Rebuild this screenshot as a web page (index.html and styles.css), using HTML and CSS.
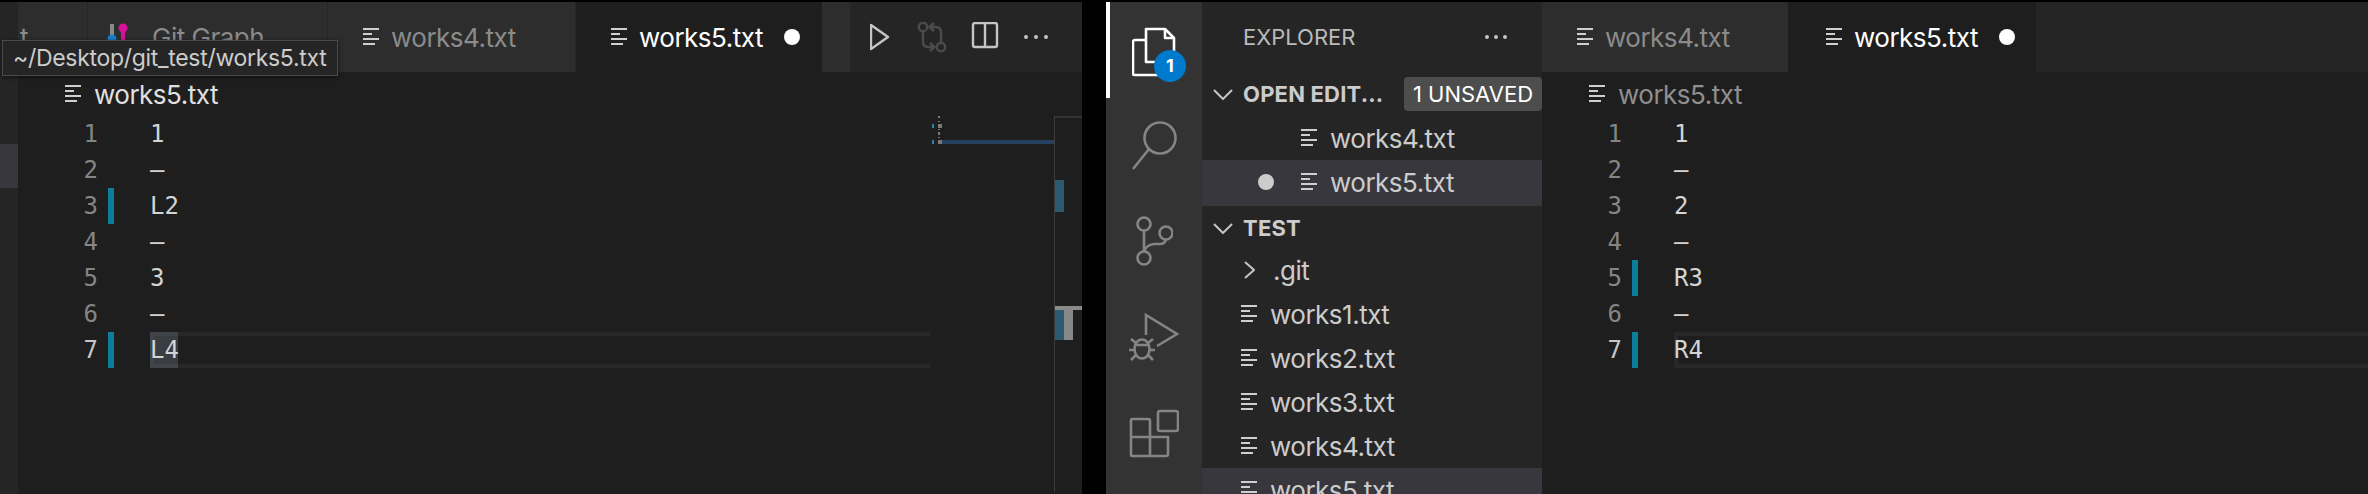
FILE: index.html
```html
<!DOCTYPE html>
<html lang="en">
<head>
<meta charset="utf-8">
<title>VS Code split</title>
<link rel="stylesheet" href="styles.css">
</head>
<body>
<svg class="defs" width="0" height="0" aria-hidden="true">
  <symbol id="file" viewBox="0 0 17 18">
    <rect x="0" y="0" width="16" height="2"/><rect x="0" y="5" width="9" height="2"/>
    <rect x="0" y="10" width="16" height="2"/><rect x="0" y="15" width="12" height="2"/>
  </symbol>
</svg>

<section class="window">
  <div class="strip"><div class="strip-slab"></div></div>
  <div class="pane">
    <div class="tabs">
      <div class="tab tab-cut">t</div>
      <div class="tab tab-graph">
        <svg class="graph-icon" width="24" height="30" viewBox="0 0 24 30">
          <rect x="3" y="2" width="4" height="14" fill="#8a8a8a"/>
          <circle cx="5" cy="17" r="4.5" fill="#1a7fd0"/>
          <circle cx="16" cy="6" r="4.5" fill="#d6119a"/>
          <rect x="14" y="6" width="4" height="16" fill="#d6119a"/>
        </svg>
        <span class="graph-label">Git Graph</span>
      </div>
      <div class="tab tab-w"><svg class="ficon"><use href="#file"/></svg><span>works4.txt</span></div>
      <div class="tab tab-active"><svg class="ficon"><use href="#file"/></svg><span>works5.txt</span><i class="dirty"></i></div>
      <div class="tab tab-blank"></div>
      <div class="actions">
        <svg width="212" height="34" viewBox="0 0 212 34" fill="none">
          <path d="M1 3 L18 15 L1 27 Z" stroke="#c5c5c5" stroke-width="2.4" stroke-linejoin="round"/>
          <g stroke="#4b4b4b" stroke-width="2.4">
            <circle cx="53" cy="5" r="4.2"/><circle cx="71" cy="25" r="4.2"/>
            <path d="M53 9 V20 Q53 25 58 25 H65 M60 21 L64.500 25 L60 29"/>
            <path d="M71 21 V10 Q71 5 66 5 H60 M64 1 L59.500 5 L64 9"/>
          </g>
          <rect x="103" y="1" width="24" height="24" rx="2" stroke="#c5c5c5" stroke-width="2.4"/>
          <path d="M115 1 V25" stroke="#c5c5c5" stroke-width="2.4"/>
          <g fill="#c5c5c5"><circle cx="156" cy="15" r="2"/><circle cx="166" cy="15" r="2"/><circle cx="176" cy="15" r="2"/></g>
        </svg>
      </div>
    </div>
    <div class="crumb crumb-on"><svg class="ficon"><use href="#file"/></svg><span>works5.txt</span></div>
    <div class="code">
      <div class="lines">
        <div class="line"><span class="num">1</span><span class="bar"></span><span class="txt">1</span></div>
        <div class="line"><span class="num">2</span><span class="bar"></span><span class="txt">–</span></div>
        <div class="line"><span class="num">3</span><span class="bar mod"></span><span class="txt">L2</span></div>
        <div class="line"><span class="num">4</span><span class="bar"></span><span class="txt">–</span></div>
        <div class="line"><span class="num">5</span><span class="bar"></span><span class="txt">3</span></div>
        <div class="line"><span class="num">6</span><span class="bar"></span><span class="txt">–</span></div>
        <div class="line"><span class="num num-on">7</span><span class="bar mod"></span><span class="txt current"><span class="sel">L4</span></span></div>
      </div>
      <svg class="minimap" width="122" height="376" viewBox="0 0 122 376">
        <rect x="0" y="8" width="2" height="4" fill="#2f86ad"/>
        <rect x="0" y="24" width="2" height="4" fill="#2f86ad"/>
        <rect x="10" y="24" width="112" height="4" fill="#264060"/>
        <g fill="#7a7a7a">
          <rect x="6" y="0" width="2" height="2"/><rect x="6" y="5" width="2" height="1"/>
          <rect x="6" y="8" width="4" height="4"/><rect x="6" y="13" width="2" height="1"/>
          <rect x="6" y="16" width="2" height="3"/><rect x="6" y="21" width="2" height="1"/>
          <rect x="6" y="24" width="4" height="4"/>
        </g>
      </svg>
      <svg class="overview" width="28" height="376" viewBox="0 0 28 376">
        <rect x="0" y="0" width="28" height="2" fill="#333"/>
        <rect x="0" y="0" width="1" height="376" fill="#3c3c3c"/>
        <rect x="1" y="64" width="9" height="32" fill="#2b596f"/>
        <rect x="1" y="194" width="9" height="30" fill="#2b596f"/>
        <rect x="10" y="192" width="9" height="32" fill="#888"/>
        <rect x="1" y="190" width="27" height="4" fill="#8a8a8a"/>
      </svg>
    </div>
  </div>
</section>

<nav class="activity">
  <div class="act act-on">
    <svg width="64" height="62" viewBox="0 0 64 62" fill="none" stroke="#fff" stroke-width="2.6" stroke-linejoin="round">
      <path d="M14 2 H33 L42 11 V35 H14 Z"/>
      <path d="M33 2 V11 H42"/>
      <path d="M14 13 H3 Q1 13 1 15 V47 Q1 48 3 48 H30 V35"/>
    </svg>
    <span class="badge">1</span>
  </div>
  <div class="act">
    <svg width="48" height="50" viewBox="0 0 48 50" fill="none" stroke="#858585" stroke-width="2.6">
      <circle cx="30" cy="17" r="15.500"/><path d="M19 28 L3 48"/>
    </svg>
  </div>
  <div class="act">
    <svg width="38" height="52" viewBox="0 0 38 52" fill="none" stroke="#858585" stroke-width="2.6">
      <circle cx="9" cy="8" r="6.500"/><circle cx="31" cy="17" r="6.500"/><circle cx="9" cy="42" r="6.500"/>
      <path d="M9 14.500 V35.500 M31 23.500 Q30 28 25 28 H19 Q11 29 9 35.500"/>
    </svg>
  </div>
  <div class="act">
    <svg width="52" height="52" viewBox="0 0 52 52" fill="none" stroke="#858585" stroke-width="2.6">
      <path d="M18 23 V3 L49 22 L29 34"/>
      <ellipse cx="14" cy="37" rx="7.500" ry="9.500"/>
      <path d="M7 33 H21 M3 27 L8 31 M25 27 L20 31 M1 38 H6 M22 38 H27 M3 48 L8 43 M25 48 L20 43"/>
    </svg>
  </div>
  <div class="act">
    <svg width="50" height="50" viewBox="0 0 50 50" fill="none" stroke="#858585" stroke-width="2.6" stroke-linejoin="round">
      <rect x="29" y="2" width="20" height="20" rx="2"/>
      <path d="M3 10 H19 Q21 10 21 12 V46 Q21 47 19 47 H3 Q2 47 2 46 V12 Q2 10 3 10 Z"/>
      <path d="M2 28 H39 V45 Q39 47 37 47 H21"/>
    </svg>
  </div>
</nav>

<aside class="sidebar">
  <header class="side-head"><span>EXPLORER</span>
    <svg width="24" height="6" viewBox="0 0 24 6" fill="#c5c5c5"><circle cx="3" cy="3" r="2"/><circle cx="12" cy="3" r="2"/><circle cx="21" cy="3" r="2"/></svg>
  </header>
  <div class="sec"><svg class="chev" width="20" height="11" viewBox="0 0 20 11" fill="none"><path d="M1 1 L10 10 L19 1"/></svg><span class="sec-title sec-cut">OPEN EDIT...</span><span class="pill">1 UNSAVED</span></div>
  <div class="row row-open"><svg class="ficon"><use href="#file"/></svg><span>works4.txt</span></div>
  <div class="row row-open row-sel"><i class="sdot"></i><svg class="ficon"><use href="#file"/></svg><span>works5.txt</span></div>
  <div class="sec sec-line"><svg class="chev" width="20" height="11" viewBox="0 0 20 11" fill="none"><path d="M1 1 L10 10 L19 1"/></svg><span class="sec-title">TEST</span></div>
  <div class="row row-tree"><svg class="chev chev-r" width="11" height="18" viewBox="0 0 11 18" fill="none"><path d="M1 1 L10 9 L1 17"/></svg><span>.git</span></div>
  <div class="row row-tree"><svg class="ficon"><use href="#file"/></svg><span>works1.txt</span></div>
  <div class="row row-tree"><svg class="ficon"><use href="#file"/></svg><span>works2.txt</span></div>
  <div class="row row-tree"><svg class="ficon"><use href="#file"/></svg><span>works3.txt</span></div>
  <div class="row row-tree"><svg class="ficon"><use href="#file"/></svg><span>works4.txt</span></div>
  <div class="row row-tree row-sel"><svg class="ficon"><use href="#file"/></svg><span>works5.txt</span></div>
</aside>

<section class="pane pane-right">
  <div class="tabs">
    <div class="tab tab-w tab-wr"><svg class="ficon"><use href="#file"/></svg><span>works4.txt</span></div>
    <div class="tab tab-active tab-ar"><svg class="ficon"><use href="#file"/></svg><span>works5.txt</span><i class="dirty"></i></div>
  </div>
  <div class="crumb"><svg class="ficon"><use href="#file"/></svg><span>works5.txt</span></div>
  <div class="code">
    <div class="lines">
      <div class="line"><span class="num">1</span><span class="bar"></span><span class="txt">1</span></div>
      <div class="line"><span class="num">2</span><span class="bar"></span><span class="txt">–</span></div>
      <div class="line"><span class="num">3</span><span class="bar"></span><span class="txt">2</span></div>
      <div class="line"><span class="num">4</span><span class="bar"></span><span class="txt">–</span></div>
      <div class="line"><span class="num">5</span><span class="bar mod"></span><span class="txt">R3</span></div>
      <div class="line"><span class="num">6</span><span class="bar"></span><span class="txt">–</span></div>
      <div class="line"><span class="num num-on">7</span><span class="bar mod"></span><span class="txt current current-r">R4</span></div>
    </div>
  </div>
</section>

<div class="tooltip">~/Desktop/git_test/works5.txt</div>
</body>
</html>
```

FILE: styles.css
```css
* { box-sizing: border-box; }
html, body { margin: 0; height: 494px; overflow: hidden; }
body {
  position: relative;
  display: flex;
  width: 2368px;
  padding-top: 2px;
  background: #000;
  font-family: Inter, "Noto Sans", sans-serif;
  font-size: 26px;
  letter-spacing: -0.5px;
  color: #ccc;
}
.defs { position: absolute; }
.window { display: flex; width: 1082px; margin-right: 24px; flex: none; }
.strip { width: 18px; flex: none; background: #252526; }
.strip-slab { margin-top: 142px; height: 44px; background: #37373d; }

.pane { flex: 1; min-width: 0; display: flex; flex-direction: column; background: #1e1e1e; }
.tabs { display: flex; height: 70px; flex: none; background: #252526; }
.tab { display: flex; align-items: center; flex: none; height: 100%; background: #2d2d2d; color: #8b8b8b; margin-right: 1px; }
.tab-cut { width: 69px; padding-left: 2px; overflow: hidden; }
.tab-graph { width: 239px; padding-left: 19px; }
.graph-icon { flex: none; margin-top: 0; }
.graph-label { margin-left: 21px; }
.tab-w { width: 247px; padding-left: 35px; gap: 11px; }
.tab-active { width: 246px; padding-left: 35px; gap: 11px; background: #1e1e1e; color: #fff; margin-right: 0; }
.tab-blank { width: 28px; margin-right: 0; }
.tab-wr { width: 246px; margin-right: 0; }
.tab-ar { width: 248px; padding-left: 38px; }
.ficon { width: 17px; height: 18px; flex: none; fill: currentColor; }
.tab .ficon, .row .ficon, .crumb .ficon { fill: #cfcfcf; }
.dirty { width: 16px; height: 16px; margin-left: 10px; border-radius: 50%; background: #fff; flex: none; }

.actions { flex: 1; display: flex; align-items: center; padding: 4px 0 0 20px; }

.crumb { display: flex; align-items: center; gap: 12px; height: 44px; flex: none; padding-left: 47px; color: #8f8f8f; }
.crumb-on { color: #e0e0e0; }

.code { display: flex; flex: 1; min-height: 0; }
.lines { flex: 1; min-width: 0; }
.line {
  display: flex;
  align-items: center;
  height: 36px;
  font-family: "DejaVu Sans Mono", "Liberation Mono", monospace;
  font-size: 24px;
  letter-spacing: 0;
}
.num { width: 80px; flex: none; text-align: right; color: #858585; }
.num-on { color: #c6c6c6; }
.bar { width: 6px; height: 36px; margin: 0 36px 0 10px; flex: none; }
.mod { background: #0c7d9d; }
.txt { color: #d4d4d4; flex: 1; min-width: 0; }
.current {
  display: flex;
  align-items: center;
  height: 36px;
  border-top: 4px solid #282828;
  border-bottom: 4px solid #282828;
}
.current-r { border-left: 4px solid #282828; text-indent: -4px; }
.sel {
  display: block;
  width: 28px;
  height: 36px;
  margin: -4px 0;
  line-height: 36px;
  background: #3a3d41;
  box-shadow: inset 4px 0 0 #41454a, inset 0 4px 0 #41454a, inset 0 -4px 0 #41454a;
}
.minimap { flex: none; margin-left: 2px; }
.overview { flex: none; }

.activity { width: 96px; flex: none; display: flex; flex-direction: column; background: #333; }
.act { display: flex; justify-content: center; align-items: center; height: 96px; }
.act-on { position: relative; border-left: 4px solid #fff; justify-content: flex-start; padding-left: 22px; align-items: flex-start; padding-top: 25px; }
.badge {
  position: absolute;
  left: 44px;
  top: 48px;
  width: 32px;
  height: 32px;
  border-radius: 50%;
  background: #007acc;
  color: #fff;
  font-size: 18px;
  font-weight: 700;
  line-height: 32px;
  text-align: center;
  letter-spacing: 0;
}

.sidebar { width: 340px; flex: none; background: #252526; overflow: hidden; }
.side-head { display: flex; align-items: center; justify-content: space-between; height: 70px; padding: 0 34px 0 41px; font-size: 22px; letter-spacing: 0; color: #bbb; }
.sec { display: flex; align-items: center; height: 44px; padding-left: 11px; font-size: 22px; font-weight: 700; letter-spacing: 0.2px; color: #ccc; }
.sec-line { border-top: 2px solid #383838; padding-top: 2px; }
.chev { flex: none; stroke: #c5c5c5; stroke-width: 2; }
.sec-title { margin-left: 10px; }
.sec-cut { width: 161px; white-space: nowrap; }
.pill { width: 138px; height: 34px; border-radius: 4px; background: #4d4d4d; color: #fff; font-weight: 400; letter-spacing: 0; text-align: center; line-height: 34px; flex: none; }
.row { display: flex; align-items: center; height: 44px; gap: 12px; }
.row-open { padding-left: 99px; }
.row-sel { background: #37373d; }
.row-tree { padding-left: 39px; }
.sdot { width: 16px; height: 16px; margin: 0 15px 0 -43px; border-radius: 50%; background: #ccc; flex: none; }
.chev-r { margin: 0 6px 0 3px; }

.tooltip {
  position: absolute;
  left: 2px;
  top: 40px;
  width: 336px;
  height: 36px;
  padding-left: 10px;
  background: #252526;
  border: 1px solid #4a4a4a;
  font-size: 23px;
  letter-spacing: -0.3px;
  line-height: 34px;
  color: #ccc;
  white-space: nowrap;
  box-shadow: 0 1px 4px rgba(0,0,0,.6);
}
```
